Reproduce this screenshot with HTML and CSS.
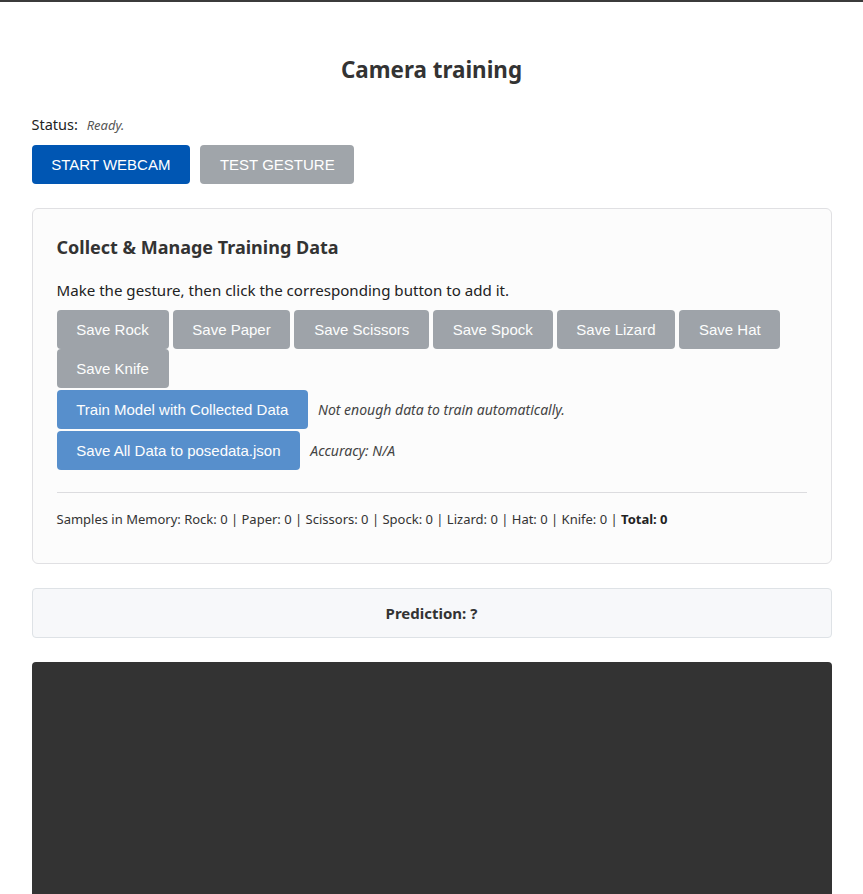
FILE: index.html
```html
<!DOCTYPE html>
<html>
<head>
<meta charset="utf-8">
<link rel="stylesheet" href="styles.css">
</head>
<body>
<main class="container">
  <h1 class="title">Camera training</h1>
  <div class="status">Status: <em class="status-value">Ready.</em></div>
  <div class="top-actions">
    <button class="btn btn-primary">START WEBCAM</button>
    <button class="btn btn-secondary">TEST GESTURE</button>
  </div>

  <section class="card">
    <h2 class="card-title">Collect &amp; Manage Training Data</h2>
    <p class="card-text">Make the gesture, then click the corresponding button to add it.</p>
    <div class="save-buttons">
      <button class="btn btn-secondary btn-faded">Save Rock</button>
      <button class="btn btn-secondary btn-faded">Save Paper</button>
      <button class="btn btn-secondary btn-faded">Save Scissors</button>
      <button class="btn btn-secondary btn-faded">Save Spock</button>
      <button class="btn btn-secondary btn-faded">Save Lizard</button>
      <button class="btn btn-secondary btn-faded">Save Hat</button>
      <button class="btn btn-secondary btn-faded">Save Knife</button>
    </div>
    <div class="action-row">
      <button class="btn btn-primary btn-faded">Train Model with Collected Data</button>
      <em class="note">Not enough data to train automatically.</em>
    </div>
    <div class="action-row">
      <button class="btn btn-primary btn-faded">Save All Data to posedata.json</button>
      <em class="note">Accuracy: N/A</em>
    </div>
    <hr class="divider">
    <div class="samples">Samples in Memory: Rock: 0 | Paper: 0 | Scissors: 0 | Spock: 0 | Lizard: 0 | Hat: 0 | Knife: 0 | <strong>Total: 0</strong></div>
  </section>

  <div class="prediction">Prediction: ?</div>

  <div class="video"></div>
</main>
</body>
</html>
```

FILE: styles.css
```css
html {
  border-top: 2px solid #3b3b3b;
}
body {
  margin: 0;
  font-family: "Noto Sans", "Open Sans", sans-serif;
  color: #222;
  background: #fff;
}
.container {
  width: 800px;
  margin: 0 auto;
  padding-top: 52px;
}
.title {
  margin: 0;
  font-size: 22.4px;
  line-height: 32px;
  font-weight: 700;
  text-align: center;
  color: #333;
}
.status {
  margin-top: 28px;
  font-size: 14.5px;
  line-height: 20px;
  color: #222;
}
.status-value {
  margin-left: 5px;
  font-size: 13px;
  color: #555;
}
.top-actions {
  display: flex;
  gap: 10px;
  margin-top: 10px;
}
.btn {
  font-family: "Liberation Sans", Arial, sans-serif;
  font-size: 15px;
  line-height: 17px;
  padding: 11px 19.75px;
  border: none;
  border-radius: 4px;
  color: #fff;
  cursor: pointer;
}
.btn-primary {
  background: #0056b3;
}
.btn-secondary {
  background: #6c757d;
}
.top-actions .btn-secondary {
  background: #a0a5aa;
}
.btn-faded {
  opacity: 0.65;
}
.card {
  margin-top: 24px;
  border: 1px solid #e0e0e3;
  border-radius: 6px;
  background: #fcfcfc;
  padding: 26px 24px 35px;
}
.card-title {
  margin: 0;
  font-size: 18px;
  line-height: 24px;
  font-weight: 700;
  color: #333;
}
.card-text {
  margin: 20px 0 0;
  font-size: 15.1px;
  line-height: 22px;
  color: #222;
}
.save-buttons {
  display: flex;
  flex-wrap: wrap;
  column-gap: 4px;
  margin-top: 9px;
}
.action-row {
  display: flex;
  align-items: center;
  gap: 10px;
  margin-top: 2px;
}
.note {
  font-size: 14px;
  color: #444;
}
.divider {
  margin: 22px 0 0;
  border: none;
  border-top: 1px solid #dcdcdf;
}
.samples {
  margin-top: 17px;
  font-size: 13px;
  line-height: 18px;
  color: #333;
}
.samples strong {
  color: #222;
}
.prediction {
  margin-top: 24px;
  height: 48px;
  display: flex;
  align-items: center;
  justify-content: center;
  border: 1px solid #dee2e6;
  border-radius: 4px;
  background: #f7f8fa;
  font-size: 15px;
  font-weight: 700;
  color: #333;
}
.video {
  margin-top: 24px;
  height: 480px;
  background: #333;
  border-radius: 4px;
}
```
